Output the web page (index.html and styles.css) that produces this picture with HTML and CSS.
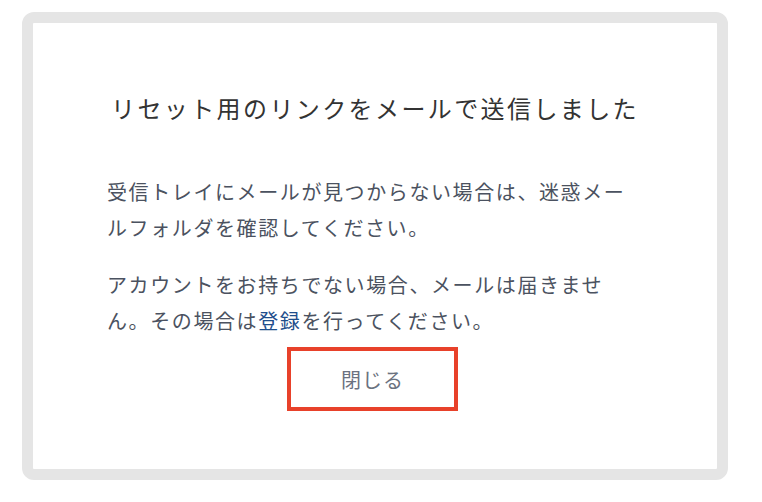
FILE: index.html
```html
<!DOCTYPE html>
<html lang="ja">

<head>
    <meta charset="UTF-8">
    <meta name="viewport" content="width=device-width, initial-scale=1.0">
    <title>パスワードリセット</title>
    <link rel="stylesheet" href="styles.css">
</head>

<body>
    <div class="frame">
        <div class="panel">
            <h1 class="title">リセット用のリンクをメールで送信しました</h1>
            <p class="message">受信トレイにメールが見つからない場合は、迷惑メールフォルダを確認してください。</p>
            <p class="message">アカウントをお持ちでない場合、メールは届きません。その場合は<a href="#" class="link">登録</a>を行ってください。</p>
            <div class="actions">
                <button type="button" class="closeButton">閉じる</button>
            </div>
        </div>
    </div>
</body>

</html>
```

FILE: styles.css
```css
body {
    margin: 0;
    background-color: #ffffff;
    font-family: "Noto Sans CJK JP", "Noto Sans", sans-serif;
}

.frame {
    width: 684px;
    height: 446px;
    margin: 12px 0 0 22px;
    border: 11px solid #e5e5e5;
    border-radius: 12px;
    background-color: #ffffff;
}

.panel {
    height: 100%;
    box-sizing: border-box;
    padding: 68px 74px 0 74px;
    border-radius: 3px;
}

.title {
    margin: 0 0 50px 0;
    font-size: 24px;
    font-weight: normal;
    line-height: 33px;
    letter-spacing: 2.4px;
    color: #333333;
    text-align: center;
}

.message {
    margin: 0 0 21px 0;
    font-size: 20px;
    line-height: 36px;
    letter-spacing: 1.6px;
    color: #4b5260;
}

.message:last-of-type {
    margin-bottom: 8px;
}

.link {
    color: #1f4e8c;
    text-decoration: none;
}

.actions {
    display: flex;
    justify-content: center;
    padding-right: 5px;
}

.closeButton {
    width: 171px;
    height: 64px;
    padding: 0;
    border: 4px solid #e8412a;
    background-color: #ffffff;
    color: #6b7280;
    font-family: inherit;
    font-size: 20px;
    letter-spacing: 1px;
    cursor: pointer;
}
```
